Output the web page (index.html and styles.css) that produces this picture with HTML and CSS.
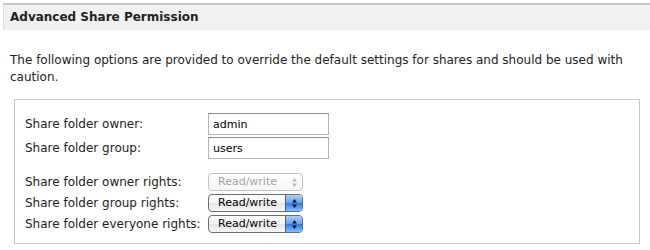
FILE: index.html
```html
<!DOCTYPE html>
<html>
<head>
<meta charset="utf-8">
<link rel="stylesheet" href="styles.css">
</head>
<body>
<div class="panel">
  <div class="header">Advanced Share Permission</div>
  <p class="desc">The following options are provided to override the default settings for shares and should be used with caution.</p>
  <div class="box">
    <div class="grid">
      <label class="lbl">Share folder owner:</label>
      <div class="field"><input class="text" type="text" value="admin"></div>
      <label class="lbl">Share folder group:</label>
      <div class="field"><input class="text" type="text" value="users"></div>
    </div>
    <div class="grid rights">
      <span class="lbl">Share folder owner rights:</span>
      <div class="field">
        <span class="select disabled"><span class="val">Read/write</span><span class="cap"><svg width="7" height="11" viewBox="0 0 7 11"><path d="M3.5 1 L6 4.5 H1 Z M3.5 10 L6 6.5 H1 Z" fill="#b8b8b8"/></svg></span></span>
      </div>
      <span class="lbl">Share folder group rights:</span>
      <div class="field">
        <span class="select"><span class="val">Read/write</span><span class="cap"><svg width="7" height="11" viewBox="0 0 7 11"><path d="M3.5 1 L6 4.5 H1 Z M3.5 10 L6 6.5 H1 Z" fill="#111"/></svg></span></span>
      </div>
      <span class="lbl">Share folder everyone rights:</span>
      <div class="field">
        <span class="select"><span class="val">Read/write</span><span class="cap"><svg width="7" height="11" viewBox="0 0 7 11"><path d="M3.5 1 L6 4.5 H1 Z M3.5 10 L6 6.5 H1 Z" fill="#111"/></svg></span></span>
      </div>
    </div>
  </div>
</div>
</body>
</html>
```

FILE: styles.css
```css
html, body {
  margin: 0;
  padding: 0;
  background: #fff;
}
body {
  font-family: "DejaVu Sans", Verdana, sans-serif;
  font-size: 12px;
  color: #222;
}
.panel {
  margin: 3px 0 0 3px;
}
.header {
  border-top: 2px solid #c8c8c8;
  border-left: 1px solid #dcdcdc;
  background: #f0f0f0;
  height: 25px;
  line-height: 24px;
  padding-left: 6px;
  font-weight: bold;
  color: #222;
}
.desc {
  margin: 22px 0 0 7px;
  line-height: 17px;
  width: 620px;
}
.box {
  margin: 13px 0 0 11px;
  width: 626px;
  height: 143px;
  border: 1px solid #c8c8c8;
  padding: 13px 0 0 10px;
  box-sizing: border-box;
  height: 145px;
}
.grid {
  display: grid;
  grid-template-columns: 183px auto;
  row-gap: 2px;
  align-items: center;
}
.rights {
  margin-top: 14px;
  row-gap: 3px;
}
.lbl {
  line-height: 18px;
}
.field {
  display: flex;
  align-items: center;
}
.text {
  width: 121px;
  height: 22px;
  box-sizing: border-box;
  margin: 0;
  border: 1px solid #b4b4b4;
  border-top-color: #8c8c8c;
  padding: 0 4px;
  font-family: "DejaVu Sans", Verdana, sans-serif;
  font-size: 11px;
  color: #000;
  background: #fff;
  outline: none;
}
.select {
  display: inline-flex;
  width: 95px;
  height: 18px;
  box-sizing: border-box;
  border: 1px solid #6d6d6d;
  border-radius: 4px;
  background: linear-gradient(#ffffff, #f2f2f2 50%, #e2e2e2 51%, #f6f6f6);
  overflow: hidden;
  font-size: 11px;
  color: #000;
}
.select .val {
  flex: 1;
  padding-left: 9px;
  line-height: 16px;
}
.select .cap {
  width: 16px;
  display: flex;
  align-items: center;
  justify-content: center;
  background: linear-gradient(#a9d0fb, #5fa2f2 50%, #2b7ae6 51%, #7fc0ff);
  border-left: 1px solid #3c64a0;
}
.select.disabled {
  border-color: #c2c2c2;
  color: #a0a0a0;
  background: linear-gradient(#ffffff, #f6f6f6);
}
.select.disabled .cap {
  background: transparent;
  border-left: none;
}
```
